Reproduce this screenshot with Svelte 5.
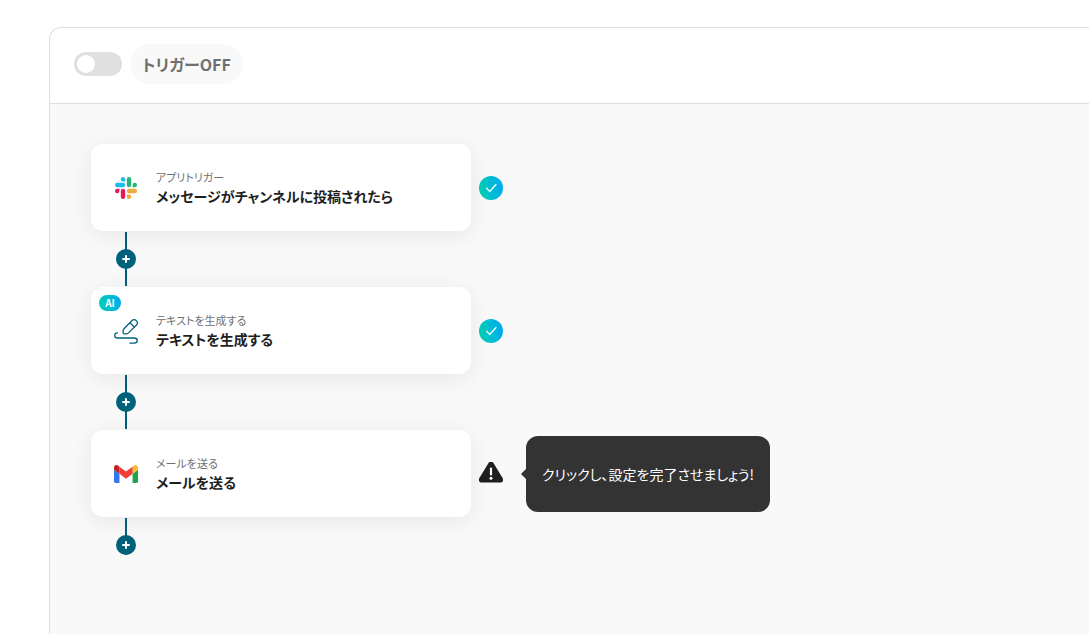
<script lang="ts">
  type Step = { id: string; kind: string; title: string; ai?: boolean; ready: boolean };

  const steps: Step[] = [
    { id: 'slack', kind: 'アプリトリガー', title: 'メッセージがチャンネルに投稿されたら', ready: true },
    { id: 'write', kind: 'テキストを生成する', title: 'テキストを生成する', ai: true, ready: true },
    { id: 'gmail', kind: 'メールを送る', title: 'メールを送る', ready: false }
  ];

  let enabled = $state(false);
</script>

<main class="panel">
  <header class="bar">
    <input id="trigger" class="switch" type="checkbox" role="switch" bind:checked={enabled} />
    <label class="state" for="trigger">トリガー{enabled ? 'ON' : 'OFF'}</label>
  </header>

  <section class="canvas">
    {#each steps as step, i (step.id)}
      <div class="row">
        <button class="card" type="button">
          {#if step.ai}<span class="ai">AI</span>{/if}
          <span class="icon">
            {#if step.id === 'slack'}
              <svg width="24" height="24" viewBox="0 0 24 24" aria-hidden="true">
                <g fill="#1fbcee">
                  <path d="M9 1a2.200 2.200 0 0 0 0 4.400h2.200V3.200A2.200 2.200 0 0 0 9 1z" />
                  <rect x="1" y="6.800" width="10.200" height="4.400" rx="2.200" />
                </g>
                <g fill="#22b67a">
                  <path d="M23 9a2.200 2.200 0 0 0-4.400 0v2.200h2.200A2.200 2.200 0 0 0 23 9z" />
                  <rect x="12.800" y="1" width="4.400" height="10.200" rx="2.200" />
                </g>
                <g fill="#edab3c">
                  <path d="M15 23a2.200 2.200 0 0 0 0-4.400h-2.200v2.200A2.200 2.200 0 0 0 15 23z" />
                  <rect x="12.800" y="12.800" width="10.200" height="4.400" rx="2.200" />
                </g>
                <g fill="#e31b58">
                  <path d="M1 15a2.200 2.200 0 0 0 4.400 0v-2.200H3.200A2.200 2.200 0 0 0 1 15z" />
                  <rect x="6.800" y="12.800" width="4.400" height="10.200" rx="2.200" />
                </g>
              </svg>
            {:else if step.id === 'write'}
              <svg width="28" height="28" viewBox="0 0 28 28" fill="none" stroke="#00617a" stroke-width="1.300" stroke-linecap="round" stroke-linejoin="round" aria-hidden="true">
                <path d="m12 11.700 8.300-8.400a2.500 2.500 0 0 1 3.600 0l.8.800a2.500 2.500 0 0 1 0 3.600l-8.200 8.200a3 3 0 0 1-2.100.9h-2.200a1.100 1.100 0 0 1-1.100-1.100v-1.900a3 3 0 0 1 .9-2.100z" />
                <path d="m18 5.700 4.400 4.400" />
                <path d="M5.400 15.900c-1.600.2-2.700 1.200-2.700 2.500 0 1.500 1.100 2.600 2.900 2.600h16.700c1.900 0 2.900.9 2.900 2.500s-1.100 2.600-2.900 2.600h-4.400" />
              </svg>
            {:else}
              <svg width="24" height="18" viewBox="52 42 88 66" aria-hidden="true">
                <path fill="#3377ee" d="M58 108h14V74L52 59v43c0 3.320 2.690 6 6 6" />
                <path fill="#23a24c" d="M120 108h14c3.320 0 6-2.690 6-6V59l-20 15" />
                <path fill="#fdbb2d" d="M120 48v26l20-15v-8c0-7.420-8.470-11.650-14.400-7.200" />
                <path fill="#ef3f37" d="M72 74V48l24 18 24-18v26L96 92" />
                <path fill="#c5221f" d="M52 51v8l20 15V48l-5.600-4.200c-5.940-4.450-14.400-.22-14.400 7.200" />
              </svg>
            {/if}
          </span>
          <span class="text">
            <span class="kind">{step.kind}</span>
            <span class="title">{step.title}</span>
          </span>
        </button>
        {#if step.ready}
          <svg class="status" width="24" height="24" viewBox="0 0 24 24" aria-hidden="true">
            <defs>
              <linearGradient id="ok-{i}" x1="0" y1="0.600" x2="1" y2="0.400">
                <stop offset="0" stop-color="#00d1b5" />
                <stop offset="1" stop-color="#00aaf0" />
              </linearGradient>
            </defs>
            <circle cx="12" cy="12" r="12" fill="url(#ok-{i})" />
            <path d="m7.300 11.900 3.400 3.600 6.600-7.200" fill="none" stroke="#fff" stroke-width="1.300" />
          </svg>
        {:else}
          <svg class="status" width="24" height="24" viewBox="0 0 24 24" aria-hidden="true">
            <path fill="#1f1f1f" d="M9.700.8a2.700 2.700 0 0 1 4.600 0l9.300 15.300c1.100 2.300.3 4.400-2.200 4.400H2.600c-2.500 0-3.300-2.100-2.200-4.400z" />
            <path d="M12 6.500v6" stroke="#fff" stroke-width="2.200" stroke-linecap="round" />
            <circle cx="12" cy="16.200" r="1.500" fill="#fff" />
          </svg>
          <p class="tip" role="tooltip">クリックし、設定を完了させましょう!</p>
        {/if}
      </div>
      <div class="link" class:last={i === steps.length - 1}>
        <button class="add" type="button" aria-label="ステップを追加">
          <svg width="20" height="20" viewBox="0 0 20 20" aria-hidden="true">
            <path d="M10 7v6M7 10h6" stroke="#fff" stroke-width="2" stroke-linecap="round" />
          </svg>
        </button>
      </div>
    {/each}
  </section>
</main>

<style>
  :global(body) {
    background: #fff;
  }
  .panel {
    box-sizing: border-box;
    display: flex;
    flex-direction: column;
    min-height: calc(100vh - 27px);
    margin: 27px 0 0 49px;
    border: solid #dedede;
    border-width: 1px 0 0 1px;
    border-radius: 12px 0 0 0;
    overflow: hidden;
    color: #1f1f1f;
    font-family: 'Noto Sans CJK JP', sans-serif;
    font-feature-settings: 'palt';
  }
  .bar {
    display: flex;
    align-items: center;
    gap: 8px;
    padding: 16px 24px 19px;
    border-bottom: 1px solid #dedede;
  }
  .switch {
    appearance: none;
    display: flex;
    align-items: center;
    box-sizing: border-box;
    width: 48px;
    height: 24px;
    margin: 0;
    padding: 3px;
    border-radius: 12px;
    background: #e0e0e0;
    cursor: pointer;
  }
  .switch::before {
    content: '';
    width: 18px;
    height: 18px;
    border-radius: 50%;
    background: #fff;
  }
  .switch:checked {
    justify-content: flex-end;
    background: #00617a;
  }
  .state {
    padding: 0 12px;
    border-radius: 20px;
    background: #f9f9f9;
    color: #707070;
    font-size: 16px;
    font-weight: 700;
    line-height: 40px;
  }
  .canvas {
    flex: 1;
    padding: 40px 41px;
    background: #f9f9f9;
  }
  .row {
    display: flex;
    align-items: center;
  }
  button {
    border: 0;
    color: inherit;
    font: inherit;
    font-feature-settings: inherit;
    cursor: pointer;
  }
  .card {
    position: relative;
    display: flex;
    align-items: center;
    gap: 16px;
    width: 380px;
    height: 87px;
    padding: 0 21px;
    border-radius: 12px;
    background: #fff;
    box-shadow: 0 4px 24px rgb(0 0 0 / 8%);
    text-align: left;
  }
  .icon {
    display: flex;
    justify-content: center;
    width: 28px;
  }
  .text {
    display: flex;
    flex-direction: column;
  }
  .kind {
    color: #707070;
    font-size: 11px;
    line-height: 16px;
  }
  .title {
    font-size: 14px;
    font-weight: 700;
    line-height: 22px;
  }
  .ai {
    position: absolute;
    top: 8px;
    left: 8px;
    width: 22px;
    border-radius: 8px;
    background: linear-gradient(80deg, #00d1b5, #00aaf0);
    color: #fff;
    font-size: 10px;
    font-weight: 700;
    line-height: 16px;
    text-align: center;
  }
  .status {
    flex: none;
    margin-left: 8px;
  }
  .tip {
    position: relative;
    margin: 0 0 0 23px;
    padding: 0 16px;
    border-radius: 12px;
    background: #333;
    color: #fff;
    font-size: 14px;
    line-height: 76px;
    white-space: nowrap;
  }
  .tip::before {
    content: '';
    position: absolute;
    top: 50%;
    left: -5px;
    border: solid transparent;
    border-width: 6px 6px 6px 0;
    border-right-color: #333;
    transform: translateY(-50%);
  }
  .link {
    display: flex;
    align-items: center;
    justify-content: center;
    width: 20px;
    height: 54px;
    margin: 1px 0 1px 25px;
    background: linear-gradient(#00617a, #00617a) center / 2px 100% no-repeat;
  }
  .link.last {
    align-items: flex-end;
    height: 37px;
  }
  .add {
    display: flex;
    padding: 0;
    border-radius: 50%;
    background: #00617a;
  }
</style>
